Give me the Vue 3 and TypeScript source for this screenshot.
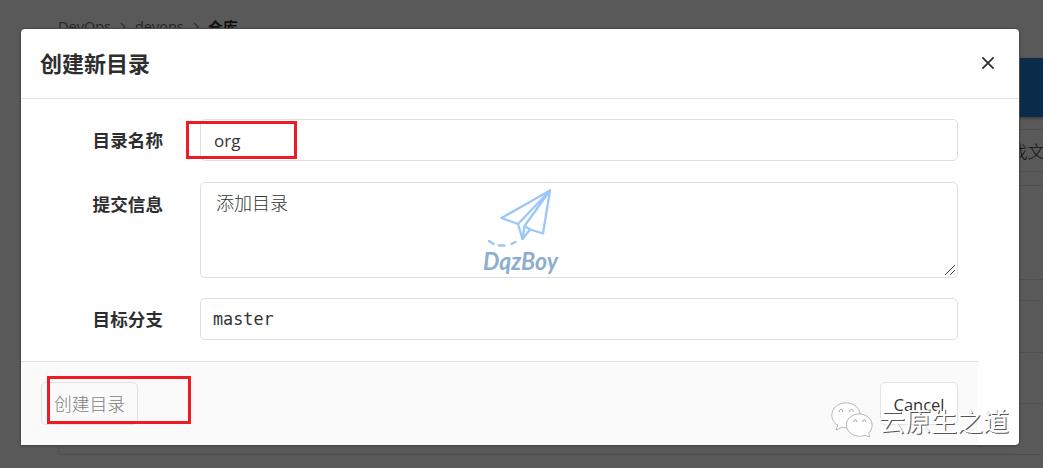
<template>
  <div class="screen">
    <div class="page">
      <nav class="breadcrumb">
        <span>DevOps</span>
        <svg class="chevron" viewBox="0 0 6 10"><path d="M1 1l4 4-4 4" /></svg>
        <span>devops</span>
        <svg class="chevron" viewBox="0 0 6 10"><path d="M1 1l4 4-4 4" /></svg>
        <strong>仓库</strong>
      </nav>
      <div class="toolbar"><div class="primary"></div></div>
      <div class="search"><span>找文</span></div>
      <div class="commit"></div>
      <div class="tree">
        <div v-for="row in 3" :key="row" class="tree-row"></div>
      </div>
    </div>

    <div class="modal" role="dialog">
      <header class="modal-header">
        <h3>{{ title }}</h3>
        <svg class="close" viewBox="0 0 14 14"><path d="M1.4 1.4l11.2 11.2M12.6 1.4L1.4 12.6" /></svg>
      </header>
      <div class="modal-body">
        <div v-for="field in fields" :key="field.name" class="form-row">
          <label :class="field.name">{{ field.label }}</label>
          <div class="control" :class="field.name">
            <span>{{ field.value }}</span>
            <svg v-if="field.name === 'message'" class="grip" viewBox="0 0 10 10">
              <path d="M0 10L10 0M5 10L10 5" />
            </svg>
          </div>
        </div>
      </div>
      <footer class="modal-footer">
        <div class="btn disabled">创建目录</div>
        <div class="btn cancel">Cancel</div>
      </footer>
    </div>

    <div class="mark mark-name"></div>
    <div class="mark mark-submit"></div>

    <svg class="plane" viewBox="0 0 80 98">
      <g class="plane-lines">
        <path d="M69 5.500L20.500 33L37 39L41.500 54L49 44.500L62 48.500Z" />
        <path d="M69 5.500L37 39M69 5.500L43.500 41L41.500 54M43.500 41L49 44.500" />
        <path class="trail" d="M8 56L12.500 59M18 60.500H23.500M30.500 59L34.500 57" />
      </g>
      <text x="2" y="85" textLength="75" lengthAdjust="spacingAndGlyphs">DqzBoy</text>
    </svg>

    <div class="watermark">
      <svg viewBox="0 0 42 36">
        <path class="bubble" d="M15 1C7 1 1 6 1 13c0 5 2 8 6 10l-2 5 6-3c3 1 6 1 9 0 5-2 9-7 9-12C29 6 23 1 15 1z" />
        <path class="bubble" d="M28 12c-7 0-12.500 5-12.500 11S21 34 28 34c2 0 4 0 6-1l4.500 2-1-4c2.500-2 3.500-5 3.500-8 0-6-6-11-13-11z" />
        <path class="eyes" d="M8.500 10a1.700 1.700 0 1 1 3 0M19 10a1.700 1.700 0 1 1 3 0M23 20a1.500 1.500 0 1 1 2.600 0M32 20a1.500 1.500 0 1 1 2.600 0" />
      </svg>
      <span>云原生之道</span>
    </div>
  </div>
</template>

<script setup lang="ts">
interface Field {
  name: string
  label: string
  value: string
}

const title = '创建新目录'

const fields: Field[] = [
  { name: 'name', label: '目录名称', value: 'org' },
  { name: 'message', label: '提交信息', value: '添加目录' },
  { name: 'branch', label: '目标分支', value: 'master' },
]
</script>

<style>
body {
  margin: 0;
  overflow: hidden;
}
</style>

<style scoped>
.screen {
  position: relative;
  width: 1043px;
  height: 468px;
  overflow: hidden;
  box-sizing: border-box;
  background: #595959;
  color: #333;
  font-family: "Open Sans", "Noto Sans CJK SC", sans-serif;
}

.screen * {
  box-sizing: border-box;
}

.page {
  padding: 17px 0 0 58px;
}

.breadcrumb {
  display: flex;
  align-items: center;
  gap: 9px;
  height: 20px;
  font-size: 14.5px;
  line-height: 20px;
  color: #252525;
}

.breadcrumb strong {
  color: #111;
  font-size: 15px;
}

.chevron {
  width: 6px;
  height: 10px;
  fill: none;
  stroke: #303030;
  stroke-width: 1.2;
}

.toolbar {
  margin-top: 21px;
  height: 59px;
  display: flex;
  justify-content: flex-end;
}

.primary {
  width: 143px;
  background: #0a2b4a;
  box-shadow: 0 1px 3px rgba(0, 0, 0, 0.4);
}

.search {
  margin-top: 12px;
  height: 43px;
  padding-left: 952px;
  border: solid #4f4f4f;
  border-width: 1px 0;
  font-size: 17.5px;
  font-weight: 300;
  line-height: 43px;
  color: #111;
  white-space: nowrap;
}

.commit {
  margin-top: 13px;
  height: 95px;
  border: 1px solid #4f4f4f;
  border-right: 0;
}

.tree {
  margin-top: 20px;
  border: 1px solid #4f4f4f;
  border-right: 0;
  border-radius: 4px;
}

.tree-row {
  height: 51px;
}

.tree-row + .tree-row {
  border-top: 1px solid #4f4f4f;
}

.modal {
  position: absolute;
  top: 29px;
  left: 21px;
  width: 998px;
  height: 416px;
  display: flex;
  flex-direction: column;
  overflow: hidden;
  background: #fff;
  border-radius: 4px 4px 4px 0;
  box-shadow: 0 0 0 1px #484848, 0 1px 3px rgba(0, 0, 0, 0.3);
}

.modal-header {
  display: flex;
  align-items: center;
  justify-content: space-between;
  height: 70px;
  padding: 0 24px 2px 19px;
  border-bottom: 1px solid #e1e1e1;
}

.modal-header h3 {
  margin: 0;
  font-size: 22px;
  line-height: 30px;
  font-weight: 700;
  color: #2e2e2e;
}

.close {
  width: 14px;
  height: 14px;
  fill: none;
  stroke: #2e2e2e;
  stroke-width: 1.8;
}

.modal-body {
  display: flex;
  flex-direction: column;
  gap: 20px;
  height: 262px;
  padding: 20px 61px 0 20px;
}

.form-row {
  display: flex;
  align-items: flex-start;
}

.form-row label {
  width: 159px;
  padding-right: 37px;
  font-size: 17.6px;
  line-height: 43px;
  height: 42px;
  font-weight: 700;
  text-align: right;
  color: #2e2e2e;
}

.form-row label.message {
  padding-top: 2px;
}

.control {
  position: relative;
  flex: 1;
  height: 42px;
  padding: 0 13px;
  border: 1px solid #dfdfdf;
  border-radius: 5px;
  font-size: 17px;
  line-height: 42px;
}

.control.message {
  height: 96px;
  margin-top: 1px;
  padding: 0 15px;
  font-weight: 300;
  font-size: 18px;
  line-height: 40px;
}

.control.branch {
  padding: 0 12px;
  font-family: "DejaVu Sans Mono", monospace;
  font-size: 16.8px;
  line-height: 40px;
}

.grip {
  position: absolute;
  right: 2px;
  bottom: 2px;
  width: 10px;
  height: 10px;
  fill: none;
  stroke: #444;
  stroke-width: 1;
}

.modal-footer {
  display: flex;
  align-items: flex-start;
  justify-content: space-between;
  width: 957px;
  height: 84px;
  padding: 20px 20px 0;
  background: #fafafa;
  border-top: 1px solid #e1e1e1;
}

.btn {
  height: 43px;
  border: 1px solid #e3e3e3;
  border-radius: 5px;
  font-size: 17.8px;
  line-height: 43px;
  text-align: center;
  white-space: nowrap;
}

.btn.disabled {
  width: 97px;
  color: #808080;
  font-weight: 300;
}

.btn.cancel {
  width: 78px;
  background: #fff;
  font-size: 16.5px;
  line-height: 44px;
}

/* red callout frames */
.mark {
  position: absolute;
  border: 3px solid #ed1c24;
}

.mark-name {
  left: 186px;
  top: 121px;
  width: 111px;
  height: 38px;
}

.mark-submit {
  left: 47px;
  top: 376px;
  width: 144px;
  height: 48px;
}

.plane {
  position: absolute;
  left: 481px;
  top: 185px;
  width: 80px;
  height: 98px;
}

.plane-lines {
  fill: none;
  stroke: #9bc8f5;
  stroke-width: 2.3;
  stroke-linejoin: round;
  stroke-linecap: round;
}

.plane text {
  fill: #8caecf;
  font-family: Lato, sans-serif;
  font-style: italic;
  font-weight: 700;
  font-size: 24px;
}

.watermark {
  position: absolute;
  left: 831px;
  top: 402px;
  display: flex;
  align-items: flex-start;
  gap: 6px;
}

.watermark svg {
  width: 42px;
  height: 36px;
}

.bubble {
  fill: #fff;
  stroke: #b5b5b5;
  stroke-width: 0.5;
  filter: drop-shadow(0.5px 0.6px 0 #777);
}

.eyes {
  fill: none;
  stroke: #888;
  stroke-width: 0.8;
}

.watermark span {
  font-size: 26px;
  line-height: 38px;
  color: #fff;
  text-shadow: 1px 1px 0 #555;
  white-space: nowrap;
}
</style>
